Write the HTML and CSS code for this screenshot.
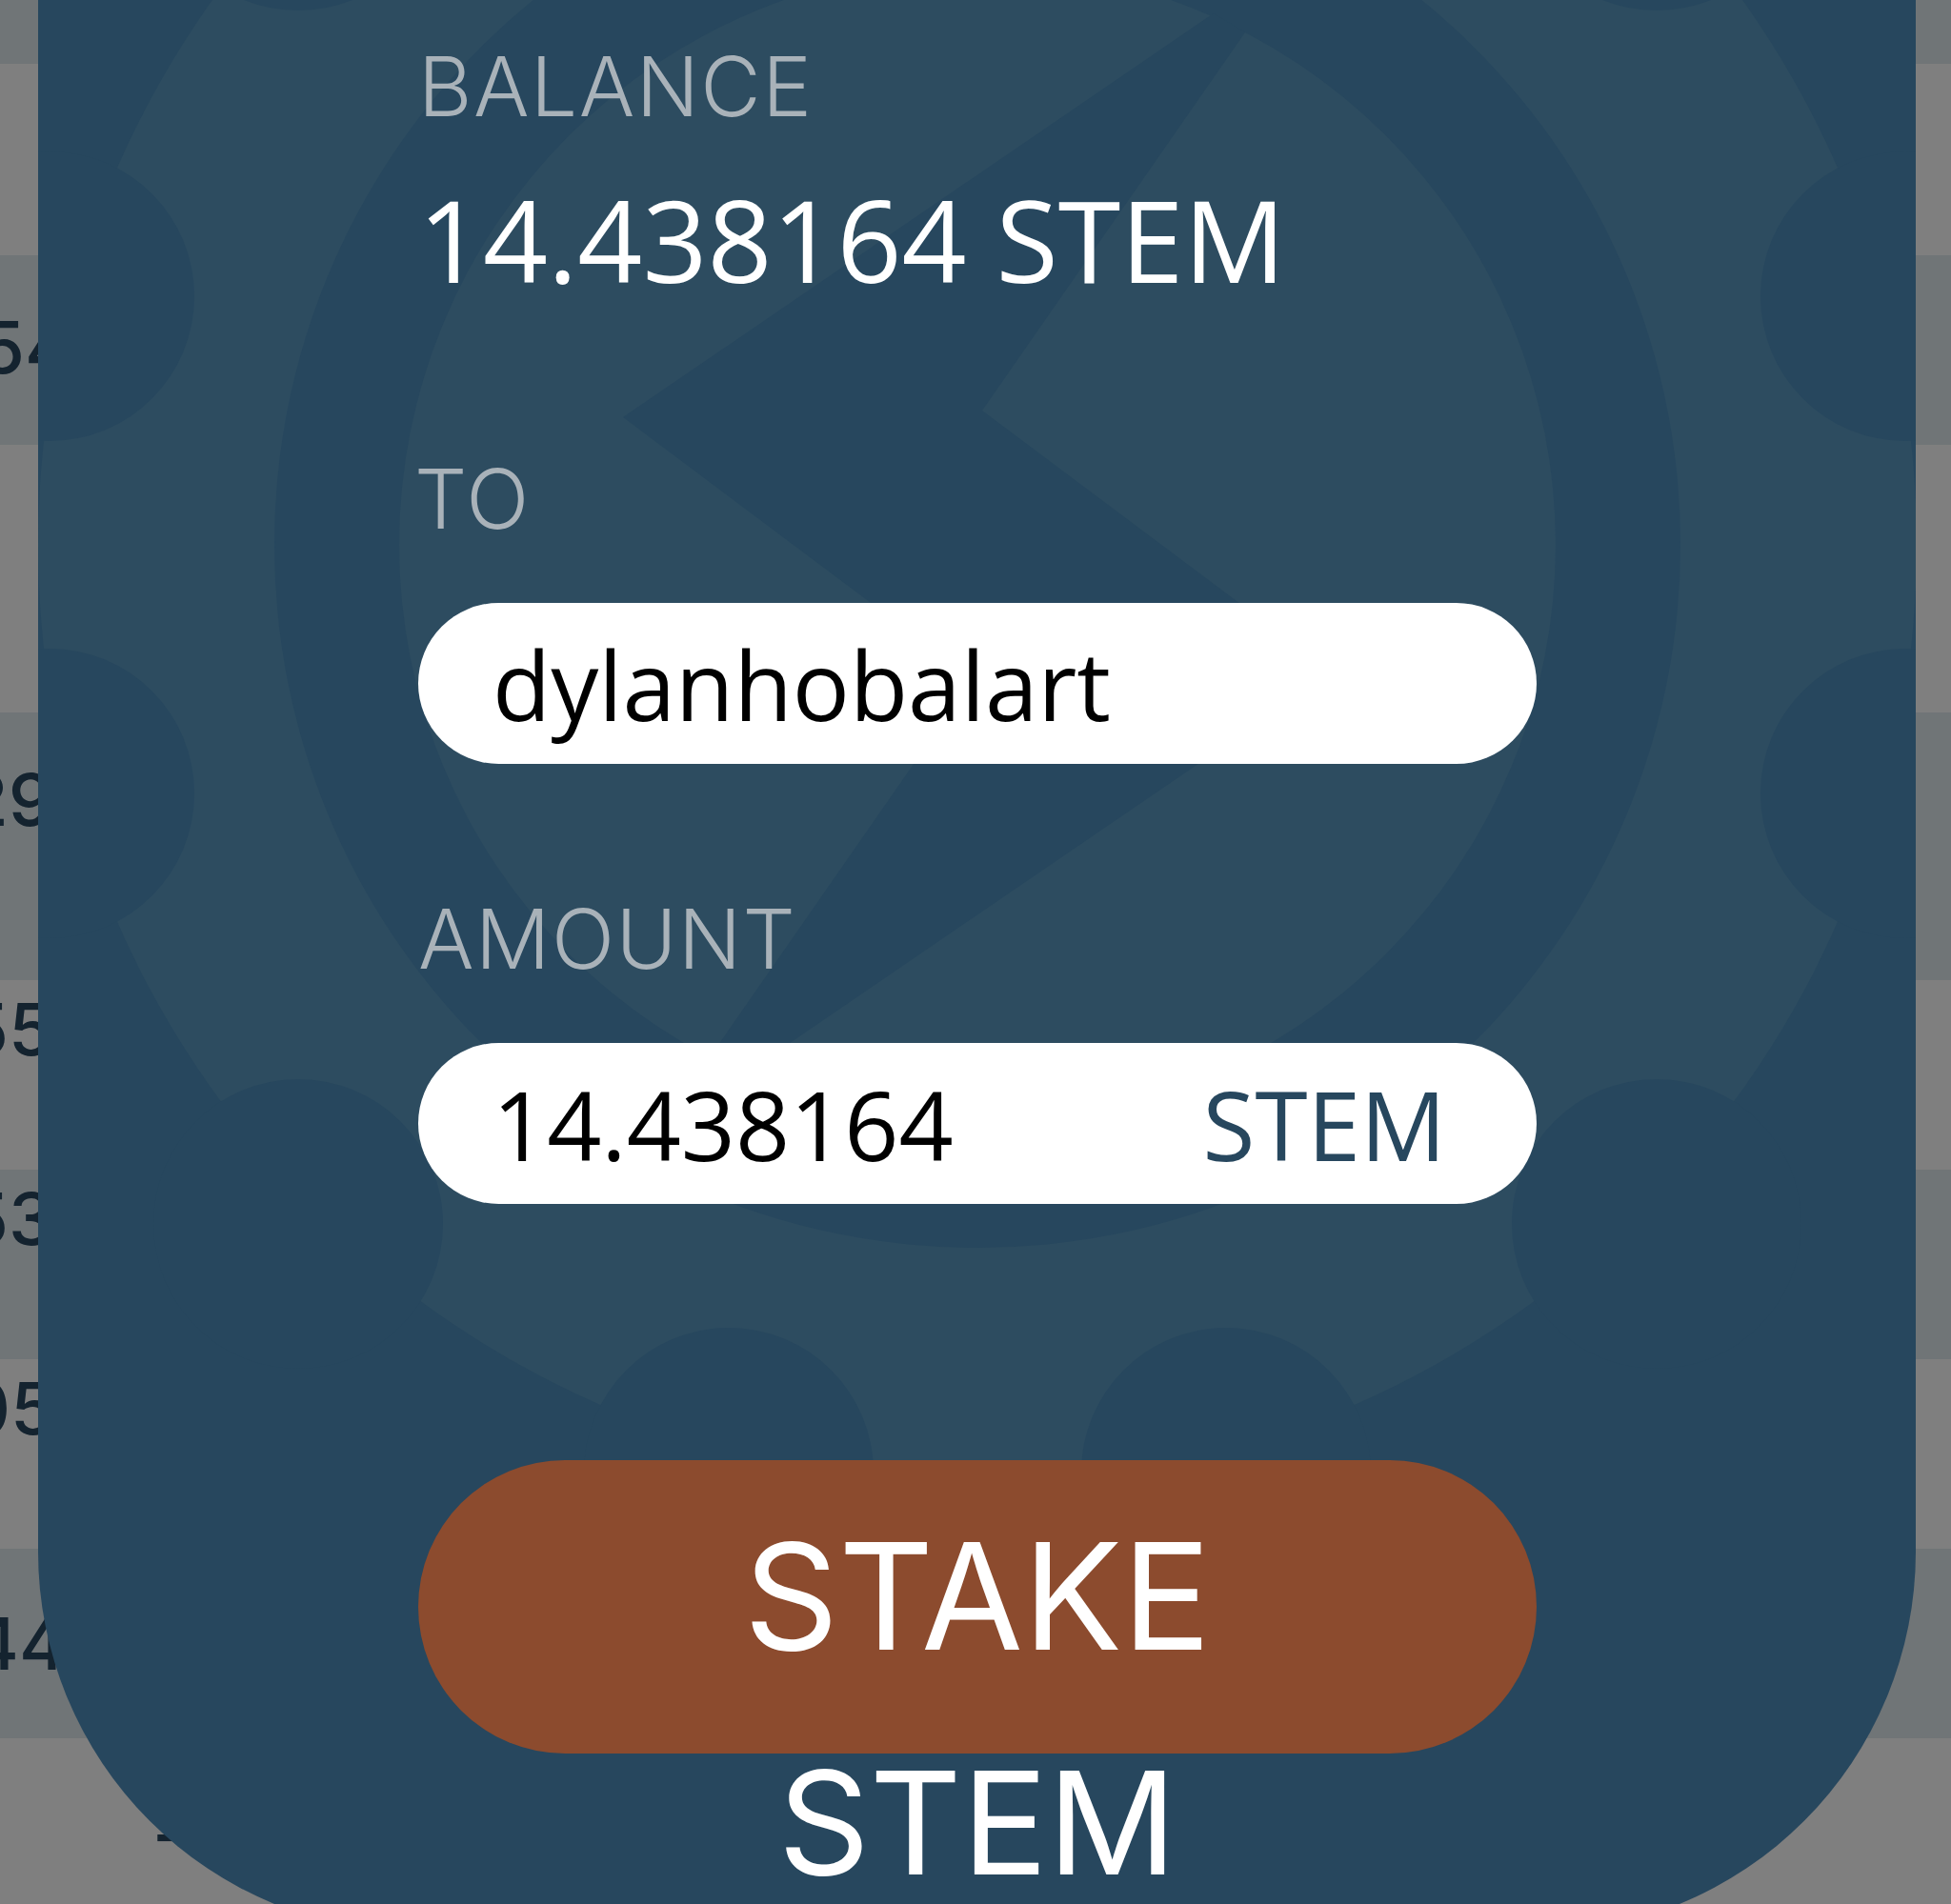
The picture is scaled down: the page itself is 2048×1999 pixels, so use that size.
FILE: index.html
```html
<!DOCTYPE html>
<html lang="en">
<head>
    <meta charset="UTF-8">
    <meta name="viewport" content="width=device-width, initial-scale=1.0">
    <title>Stake</title>
    <link rel="stylesheet" href="styles.css">
</head>
<body>
    <!-- Table behind the dialog -->
    <div class="table">
        <div class="row stripe row-top"></div>
        <div class="row row-blank"></div>
        <div class="row stripe pad-a shift-a"><span>54</span></div>
        <div class="row row-blank-tall"></div>
        <div class="row stripe row-tall pad-b shift-b"><span>29</span></div>
        <div class="row pad-c shift-b"><span>55</span></div>
        <div class="row stripe pad-c shift-b"><span>53</span></div>
        <div class="row pad-c shift-b"><span>05</span></div>
        <div class="row stripe pad-d shift-c"><span>44</span></div>
        <div class="row row-last shift-d"><span>-</span></div>
    </div>
    <div class="overlay"></div>

    <div class="dialog">
        <!-- Gear watermark -->
        <svg class="gear" viewBox="40 0 1971 2029" aria-hidden="true">
            <circle class="gear-light" cx="1026" cy="572" r="986"/>
            <g class="gear-dark">
                <circle cx="2000" cy="833" r="152"/>
                <circle cx="2000" cy="311" r="152"/>
                <circle cx="1739" cy="1285" r="152"/>
                <circle cx="1739" cy="-141" r="152"/>
                <circle cx="1287" cy="1546" r="152"/>
                <circle cx="765" cy="1546" r="152"/>
                <circle cx="313" cy="1285" r="152"/>
                <circle cx="313" cy="-141" r="152"/>
                <circle cx="52" cy="833" r="152"/>
                <circle cx="52" cy="311" r="152"/>
                <circle cx="1026" cy="572" r="738"/>
            </g>
            <circle class="gear-light" cx="1026" cy="572" r="607"/>
            <polygon class="gear-dark" points="1274,14 654,438 1021,713 745,1110 778,1130 1398,706 1031,431 1307,34"/>
        </svg>

        <form class="stake-form">
            <div class="label">BALANCE</div>
            <div class="balance">14.438164 STEM</div>

            <label class="label label-to" for="to">TO</label>
            <div class="field">
                <input type="text" id="to" value="dylanhobalart">
            </div>

            <label class="label label-amount" for="amount">AMOUNT</label>
            <div class="field">
                <input type="text" id="amount" value="14.438164">
                <span class="unit">STEM</span>
            </div>

            <button type="button" class="stake-btn">STAKE</button>
            <div class="stake-caption">STEM</div>
        </form>
    </div>
</body>
</html>
```

FILE: styles.css
```css
html, body {
    margin: 0;
    padding: 0;
    height: 100%;
    overflow: hidden;
}

body {
    position: relative;
    background: #fff;
    font-family: 'Inter', sans-serif;
}

/* Table behind the dialog */
.row {
    height: 199px;
    box-sizing: border-box;
    font-size: 76px;
    font-weight: 500;
    line-height: 90px;
    color: #28475f;
    white-space: nowrap;
}

.stripe {
    background: #e0eaef;
}

.row-top { height: 67px; }
.row-blank { height: 201px; }
.row-blank-tall { height: 281px; }
.row-tall { height: 281px; }
.row-last { height: 174px; padding-top: 55px; }

.pad-a { padding-top: 51px; }
.pad-b { padding-top: 46px; }
.pad-c { padding-top: 6px; }
.pad-d { padding-top: 54px; }

.shift-a { text-indent: -21px; }
.shift-b { text-indent: -38px; }
.shift-c { text-indent: -30px; }
.shift-d { text-indent: 160px; }

.overlay {
    position: absolute;
    inset: 0;
    background: rgba(0, 0, 0, 0.5);
}

/* Dialog */
.dialog {
    position: absolute;
    top: 0;
    left: 40px;
    width: 1971px;
    height: 2029px;
    overflow: hidden;
    background: #27475e;
    border-radius: 0 0 400px 400px;
}

.gear {
    position: absolute;
    top: 0;
    left: 0;
    width: 1971px;
    height: 2029px;
    overflow: hidden;
}

.gear-light { fill: #2d4c60; }
.gear-dark { fill: #27475e; }

.stake-form {
    position: relative;
    width: 1174px;
    margin-left: 399px;
    padding-top: 41px;
}

.label {
    display: block;
    font-size: 87px;
    font-weight: 300;
    letter-spacing: 1.5px;
    line-height: 100px;
    color: #a9b2b9;
}

.balance {
    margin-top: 40px;
    font-family: 'Open Sans', sans-serif;
    font-size: 119px;
    font-weight: 400;
    line-height: 140px;
    color: #fff;
}

.label-to {
    margin-top: 153px;
    margin-left: -4px;
}

.label-amount { margin-top: 134px; }

.field {
    display: flex;
    align-items: center;
    height: 169px;
    margin-top: 59px;
    padding: 0 95px 0 78px;
    box-sizing: border-box;
    background: #fff;
    border-radius: 85px;
    font-family: 'Open Sans', sans-serif;
    font-size: 100px;
}

.field input {
    flex: 1;
    min-width: 0;
    padding: 0;
    border: none;
    outline: none;
    background: transparent;
    font: inherit;
    color: #000;
}

.unit {
    color: #27475e;
}

.stake-btn {
    display: block;
    width: 100%;
    height: 308px;
    margin-top: 269px;
    padding: 0 0 24px;
    border: none;
    border-radius: 154px;
    background: #8c4b2e;
    color: #fff;
    font-family: 'Inter', sans-serif;
    font-size: 155px;
    font-weight: 400;
}

.stake-caption {
    margin-top: 13px;
    font-size: 150px;
    line-height: 120px;
    text-align: center;
    color: #fff;
}
```
